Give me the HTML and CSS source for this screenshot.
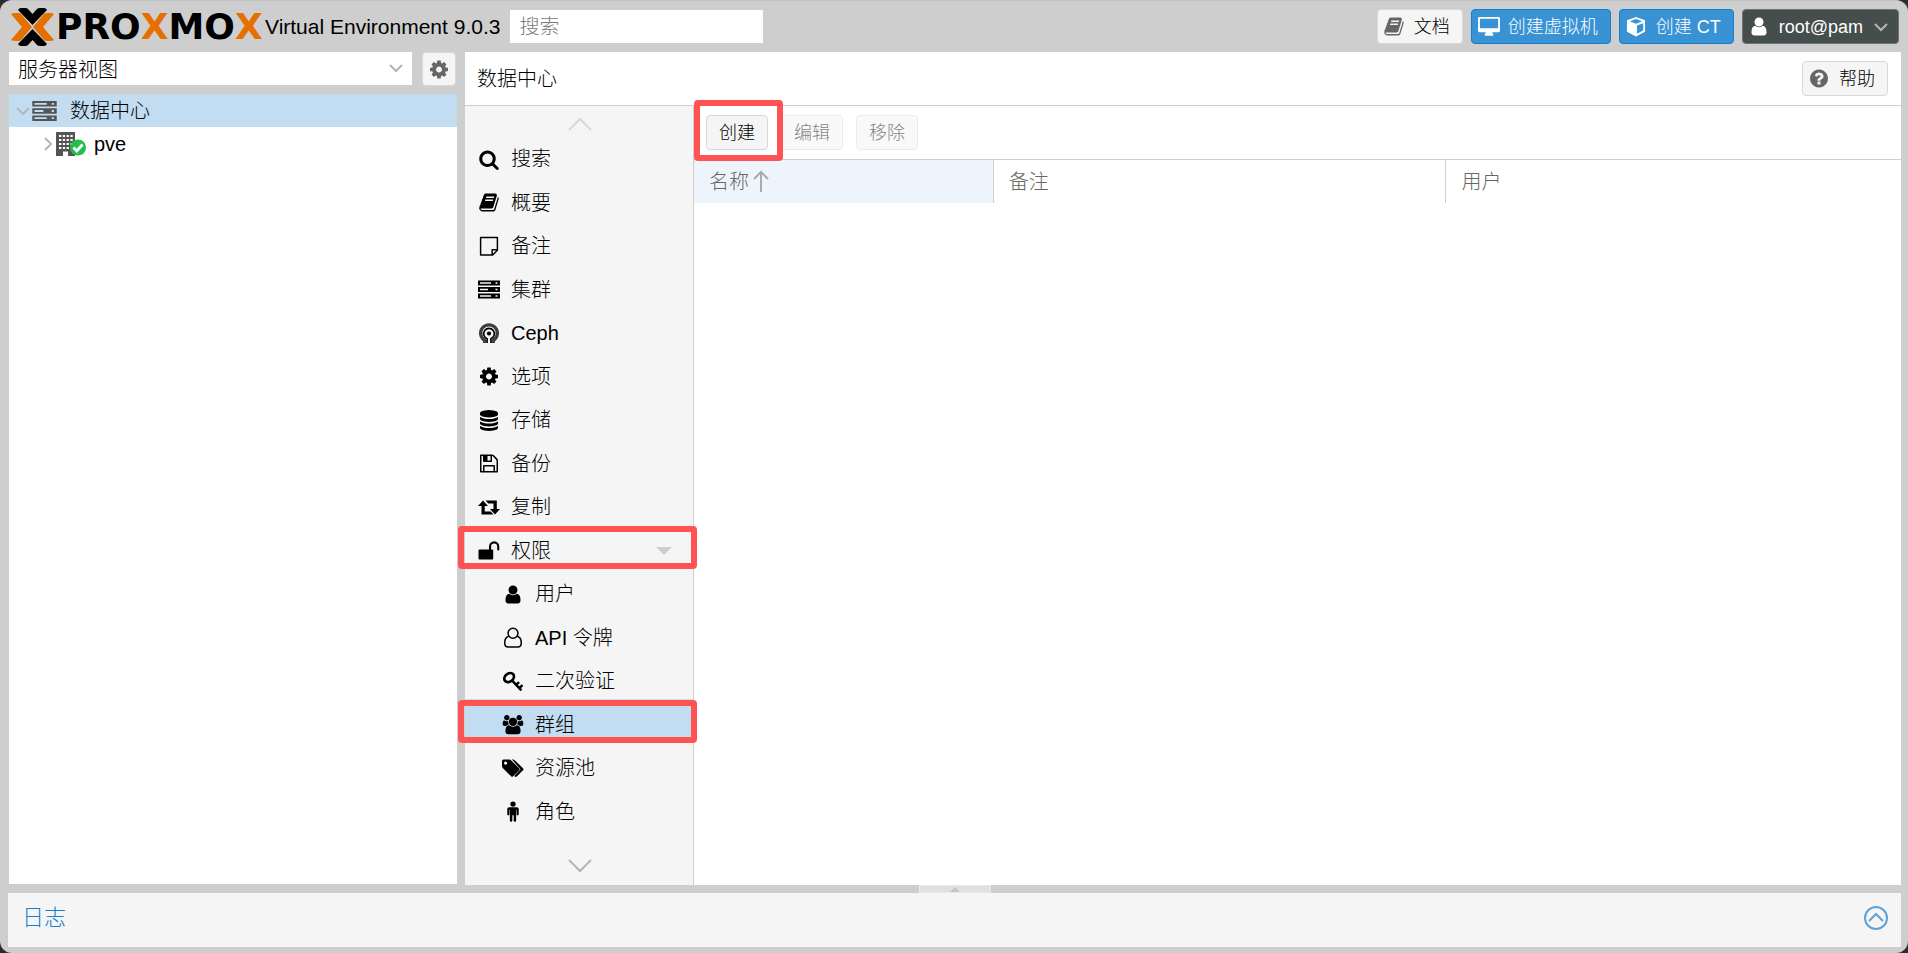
FILE: index.html
```html
<!DOCTYPE html>
<html lang="zh-CN">
  <head>
    <meta charset="UTF-8" />
    <meta name="viewport" content="width=device-width, initial-scale=1.0" />
    <title>pve - Proxmox Virtual Environment</title>
    <link rel="stylesheet" href="styles.css">
  </head>
  <body>
    <!-- Shared icons -->
    <svg class="sprite" aria-hidden="true">
      <symbol id="i-search" viewBox="0 0 1792 1792"><path d="M1216 832q0-185-131.5-316.5t-316.5-131.5-316.5 131.5-131.5 316.5 131.5 316.5 316.5 131.5 316.5-131.5 131.5-316.5zm512 832q0 52-38 90t-90 38q-54 0-90-38l-343-342q-179 124-399 124-143 0-273.5-55.5t-225-150-150-225-55.5-273.5 55.5-273.5 150-225 225-150 273.5-55.5 273.5 55.5 225 150 150 225 55.5 273.5q0 220-124 399l343 343q37 37 37 90z"/></symbol>
      <symbol id="i-book" viewBox="0 0 1792 1792"><path d="M1703 478q40 57 18 129l-275 906q-19 64-76.500 107.500t-122.500 43.500h-923q-77 0-148.500-53.500t-99.500-131.500q-24-67-2-127 0-4 3-27t4-37q1-8-3-21.500t-3-19.500q2-11 8-21t16.500-23.500 16.500-23.500q23-38 45-91.500t30-91.500q3-10 .5-30t-.5-28q3-11 17-28t17-23q21-36 42-92t25-90q1-9-2.500-32t.5-28q4-13 22-30.500t22-22.500q19-26 42.500-84.500t27.500-96.500q1-8-3-25.500t-2-26.500q2-8 9-18t18-23 17-21q8-12 16.500-30.500t15-35 16-36 19.500-32 26.500-23.500 36-11.500 47.500 5.500l-1 3q38-9 51-9h761q74 0 114 56t18 130l-274 906q-36 119-71.500 153.500t-128.500 34.500h-869q-27 0-38 15-11 16-1 43 24 70 144 70h923q29 0 56-15.500t35-41.500l300-987q7-22 5-57 38 15 59 43zm-1064 2q-4 13 2 22.500t20 9.500h608q13 0 25.500-9.500t16.500-22.500l21-64q4-13-2-22.500t-20-9.500h-608q-13 0-25.500 9.500t-16.500 22.500zm-83 256q-4 13 2 22.500t20 9.500h608q13 0 25.500-9.500t16.500-22.500l21-64q4-13-2-22.500t-20-9.500h-608q-13 0-25.500 9.500t-16.500 22.500z"/></symbol>
      <symbol id="i-note" viewBox="0 0 20 20"><path d="M2 1.500h16v12L13.500 18H2zM18 13h-5v5" fill="none" stroke="currentColor" stroke-width="1.400" stroke-linejoin="round"/></symbol>
      <symbol id="i-server" viewBox="0 0 22 18"><path fill-rule="evenodd" d="M0 0h22v5H0zM2 1.700v1.600h11V1.700zM17.500 1.700v1.600h2V1.700zM0 6.500h22v5H0zM2 8.200v1.600h8V8.200zM17.500 8.200v1.600h2V8.200zM0 13h22v5H0zM2 14.700v1.600h11v-1.600zM17.500 14.700v1.600h2v-1.600z"/></symbol>
      <symbol id="i-ceph" viewBox="0 0 22 22"><g fill="none" stroke="currentColor"><path d="M6.500 21v-2.800A8.800 8.800 0 1 1 15.500 18.200V21" stroke-width="3.400" opacity=".75"/><path d="M9 21v-4.500A5.600 5.600 0 1 1 13 16.500V21" stroke-width="1.700"/></g><circle cx="11" cy="11" r="2.200"/></symbol>
      <symbol id="i-cog" viewBox="0 0 1792 1792"><path d="M1152 896q0-106-75-181t-181-75-181 75-75 181 75 181 181 75 181-75 75-181zm512-109v222q0 12-8 23t-20 13l-185 28q-19 54-39 91 35 50 107 138 10 12 10 25t-9 23q-27 37-99 108t-94 71q-12 0-26-9l-138-108q-44 23-91 38-16 136-29 186-7 28-36 28h-222q-14 0-24.500-8.500t-11.500-21.500l-28-184q-49-16-90-37l-141 107q-10 9-25 9-14 0-25-11-126-114-165-168-7-10-7-23 0-12 8-23 15-21 51-66.500t54-70.500q-27-50-41-99l-183-27q-13-2-21-12.500t-8-23.500v-222q0-12 8-23t19-13l186-28q14-46 39-92-40-57-107-138-10-12-10-24 0-10 9-23 26-36 98.500-107.500t94.500-71.500q13 0 26 10l138 107q44-23 91-38 16-136 29-186 7-28 36-28h222q14 0 24.500 8.500t11.500 21.500l28 184q49 16 90 37l142-107q9-9 24-9 13 0 25 10 129 119 165 170 7 8 7 22 0 12-8 23-15 21-51 66.500t-54 70.500q26 50 41 98l183 28q13 2 21 12.500t8 23.500z"/></symbol>
      <symbol id="i-database" viewBox="0 0 1792 1792"><path d="M896 768q237 0 443-43t325-127v170q0 69-103 128t-280 93.500-385 34.500-385-34.500-280-93.500-103-128v-170q119 84 325 127t443 43zm0 768q237 0 443-43t325-127v170q0 69-103 128t-280 93.500-385 34.500-385-34.500-280-93.500-103-128v-170q119 84 325 127t443 43zm0-384q237 0 443-43t325-127v170q0 69-103 128t-280 93.500-385 34.500-385-34.500-280-93.500-103-128v-170q119 84 325 127t443 43zm0-1152q208 0 385 34.500t280 93.500 103 128v128q0 69-103 128t-280 93.500-385 34.500-385-34.500-280-93.500-103-128v-128q0-69 103-128t280-93.500 385-34.500z"/></symbol>
      <symbol id="i-floppy" viewBox="0 0 1792 1792"><path d="M512 1536h768v-384h-768v384zm896 0h128v-896q0-14-10-38.500t-20-34.500l-281-281q-10-10-34-20t-39-10v416q0 40-28 68t-68 28h-576q-40 0-68-28t-28-68v-416h-128v1280h128v-416q0-40 28-68t68-28h832q40 0 68 28t28 68v416zm-384-928v-320q0-13-9.500-22.500t-22.500-9.500h-192q-13 0-22.500 9.500t-9.500 22.500v320q0 13 9.500 22.500t22.500 9.500h192q13 0 22.500-9.500t9.500-22.500zm640 32v928q0 40-28 68t-68 28h-1344q-40 0-68-28t-28-68v-1344q0-40 28-68t68-28h928q40 0 88 20t76 48l280 280q28 28 48 76t20 88z"/></symbol>
      <symbol id="i-retweet" viewBox="0 0 22 16"><path d="M5 1l5 5.500H6.700V12h6l2.800 3H3.500V6.500H0zM7.500 1h11.300v8.500H22L17 15l-5-5.500h3.500V4h-5.200z"/></symbol>
      <symbol id="i-unlock" viewBox="0 0 20 20"><rect x="0" y="9" width="14" height="9.500" rx="1"/><path d="M11 9.500V6.200a3.900 3.900 0 0 1 7.800 0V9" fill="none" stroke="currentColor" stroke-width="2" stroke-linecap="round"/></symbol>
      <symbol id="i-user" viewBox="0 0 1792 1792"><path d="M1536 1399q0 109-62.500 187t-150.500 78h-854q-88 0-150.500-78t-62.500-187q0-85 8.500-160.500t31.500-152 58.500-131 94-89 134.500-34.500q131 128 313 128t313-128q76 0 134.500 34.500t94 89 58.500 131 31.500 152 8.500 160.500zm-256-887q0 159-112.500 271.500t-271.500 112.500-271.500-112.500-112.500-271.500 112.500-271.500 271.500-112.500 271.500 112.500 112.500 271.500z"/></symbol>
      <symbol id="i-user-o" viewBox="0 0 20 22"><g fill="none" stroke="currentColor" stroke-width="1.600"><circle cx="10" cy="6.500" r="5.200"/><path d="M5.500 9.700C2.800 10.500 1.300 13 1.300 16.500c0 2.800 1.400 4.500 3.700 4.500h10c2.300 0 3.700-1.700 3.700-4.500 0-3.500-1.500-6-4.200-6.800"/></g></symbol>
      <symbol id="i-key" viewBox="0 0 20 20"><g fill="none" stroke="currentColor"><ellipse cx="6.300" cy="6.300" rx="5" ry="3.800" transform="rotate(-40 6.300 6.300)" stroke-width="2.600"/><path d="M9 9l9 9.500M13 13.300l2.800-2.700M16 16.300l3-2.800" stroke-width="2.400"/></g></symbol>
      <symbol id="i-users" viewBox="0 0 2048 1792"><path d="M657 896q-162 5-265 128h-134q-82 0-138-40.500t-56-118.500q0-353 124-353 6 0 43.500 21t97.500 42.500 119 21.500q67 0 133-23-5 37-5 66 0 139 81 256zm1071 637q0 120-73 189.500t-194 69.500h-874q-121 0-194-69.500t-73-189.500q0-53 3.500-103.500t14-109 26.500-108.500 43-97.500 62-81 85.500-53.500 111.500-20q10 0 43 21.500t73 48 107 48 135 21.500 135-21.500 107-48 73-48 43-21.500q61 0 111.500 20t85.500 53.500 62 81 43 97.500 26.500 108.500 14 109 3.500 103.500zm-1024-1277q0 106-75 181t-181 75-181-75-75-181 75-181 181-75 181 75 75 181zm704 384q0 159-112.500 271.500t-271.500 112.500-271.500-112.500-112.500-271.500 112.500-271.500 271.500-112.500 271.500 112.500 112.500 271.500zm576 225q0 78-56 118.500t-138 40.500h-134q-103-123-265-128 81-117 81-256 0-29-5-66 66 23 133 23 59 0 119-21.500t97.500-42.500 43.500-21q124 0 124 353zm-128-609q0 106-75 181t-181 75-181-75-75-181 75-181 181-75 181 75 75 181z"/></symbol>
      <symbol id="i-tags" viewBox="0 0 22 20"><path fill-rule="evenodd" d="M0 2.500Q0 1 1.500 1H7q1.300 0 2.300 1l7.800 7.800q1 1 0 2l-6 6q-1 1-2 0L1 9.700Q0 8.700 0 7.500zM3.600 3a1.600 1.600 0 1 0 0 3.200 1.600 1.600 0 0 0 0-3.200z"/><path d="M9.800 1h1q1.200 0 2.200 1l8 7.800q1 1 0 2l-6 6q-1 1-2.200.3l-.6-.6 6.300-6.700L10.800 2z"/></symbol>
      <symbol id="i-male" viewBox="0 0 20 22"><circle cx="10" cy="3.200" r="2.800"/><path d="M6 6.500h8q2 0 2 2V14q0 1.200-1.100 1.200T13.800 14V9.500h-.5v11q0 1.300-1.300 1.300t-1.300-1.300V15H9.300v5.500Q9.300 21.800 8 21.800t-1.300-1.300v-11h-.5V14q0 1.200-1.100 1.200T4 14V8.500q0-2 2-2z"/></symbol>
      <symbol id="i-desktop" viewBox="0 0 24 22"><path fill-rule="evenodd" d="M2 1h20q1.500 0 1.500 1.500v13Q23.500 17 22 17h-6.500q0 1.500 1 2.500v1.300h-9v-1.300q1-1 1-2.500H2Q.5 17 .5 15.500v-13Q.5 1 2 1zm.5 2v9.800h19V3z"/></symbol>
      <symbol id="i-cube" viewBox="0 0 22 22"><path fill-rule="evenodd" d="M11 1l9.500 3.500v12L11 21.500l-9.500-5v-12zM11 3.200L4.500 5.500 11 8l6.500-2.500zM12 10v8.700l6.500-3.500V7.500z"/></symbol>
      <symbol id="i-help" viewBox="0 0 1792 1792"><path d="M1024 1376v-192q0-14-9-23t-23-9h-192q-14 0-23 9t-9 23v192q0 14 9 23t23 9h192q14 0 23-9t9-23zm256-672q0-88-55.500-163t-138.500-116-170-41q-243 0-371 213-15 24 8 42l132 100q7 6 19 6 16 0 25-12 53-68 86-92 34-24 86-24 48 0 85.500 26t37.500 59q0 38-20 61t-68 45q-63 28-115.500 86.500t-52.500 125.500v36q0 14 9 23t23 9h192q14 0 23-9t9-23q0-19 21.500-49.500t54.500-49.500q32-18 49-28.500t46-35 44.500-48 28-60.500 12.500-81zm384 192q0 209-103 385.500t-279.500 279.500-385.500 103-385.500-103-279.500-279.500-103-385.500 103-385.500 279.500-279.500 385.500-103 385.500 103 279.500 279.500 103 385.500z"/></symbol>
      <symbol id="i-down" viewBox="0 0 14 10"><path d="M1 2l6 6 6-6" fill="none" stroke="currentColor" stroke-width="2"/></symbol>
    </svg>

    <div class="viewport">
      <header class="topbar">
        <svg class="emblem" viewBox="0 0 43 38" aria-hidden="true">
          <path fill="#000" d="M10 0h4q2 0 3 1l4.500 5L26 1q1-1 3-1h4q2 0 3 2L21.500 17 7 2q1-2 3-2zM10 38h4q2 0 3-1l4.500-5 4.500 5q1 1 3 1h4q2 0 3-2L21.500 21 7 36q1 2 3 2z"/>
          <path fill="#e57000" d="M0 6q2-1 4-1h3q2 0 3 1l11 13-11 13q-1 1-3 1H4q-2 0-4-1l11-13zM43 6q-2-1-4-1h-3q-2 0-3 1L22 19l11 13q1 1 3 1h3q2 0 4-1L32 19z"/>
        </svg>
        <span class="wordmark">PRO<b>X</b>MO<b>X</b></span>
        <span class="version">Virtual Environment 9.0.3</span>
        <input class="search" type="text" placeholder="搜索" aria-label="搜索" />
        <div class="actions">
          <button class="btn" type="button"><svg class="icon"><use href="#i-book"/></svg>文档</button>
          <button class="btn btn-blue" type="button"><svg class="icon icon-wide"><use href="#i-desktop"/></svg>创建虚拟机</button>
          <button class="btn btn-blue" type="button"><svg class="icon"><use href="#i-cube"/></svg>创建 CT</button>
          <button class="btn btn-dark" type="button"><svg class="icon"><use href="#i-user"/></svg>root@pam<svg class="arrow"><use href="#i-down"/></svg></button>
        </div>
      </header>

      <div class="main">
        <!-- Resource tree -->
        <aside class="resources">
          <div class="view-bar">
            <div class="view-select">
              <select aria-label="视图"><option>服务器视图</option></select>
              <svg class="arrow"><use href="#i-down"/></svg>
            </div>
            <button class="btn btn-gear" type="button" aria-label="设置"><svg class="icon"><use href="#i-cog"/></svg></button>
          </div>
          <ul class="tree">
            <li class="node selected">
              <svg class="expander"><use href="#i-down"/></svg>
              <svg class="tree-icon"><use href="#i-server"/></svg>
              <span>数据中心</span>
            </li>
            <li class="node child">
              <svg class="expander closed"><use href="#i-down"/></svg>
              <svg class="tree-icon host" viewBox="0 0 32 26">
                <path fill="#555" d="M1 1h19v24H1z"/>
                <path d="M4 5h14M4 9h14M4 13h14M4 17h10" stroke="#fff" stroke-width="2.200" stroke-dasharray="2.300 1.500"/>
                <path fill="#fff" d="M8 20.500h5V25H8z"/>
                <circle cx="23" cy="16.500" r="8" fill="#21bf4b"/>
                <path d="M18.500 16.500l3.300 3.500 5.700-6.500" fill="none" stroke="#fff" stroke-width="2.800"/>
              </svg>
              <span>pve</span>
            </li>
          </ul>
        </aside>

        <!-- Datacenter panel -->
        <main class="content">
          <div class="content-head">
            <h1>数据中心</h1>
            <button class="btn btn-help" type="button"><svg class="icon"><use href="#i-help"/></svg>帮助</button>
          </div>
          <div class="content-body">
            <nav class="menu">
              <button class="scroller up" type="button" aria-label="向上"><svg viewBox="0 0 24 14"><path d="M1 13L12 2l11 11"/></svg></button>
              <ul>
                <li><a href="#"><svg class="icon"><use href="#i-search"/></svg>搜索</a></li>
                <li><a href="#"><svg class="icon"><use href="#i-book"/></svg>概要</a></li>
                <li><a href="#"><svg class="icon"><use href="#i-note"/></svg>备注</a></li>
                <li><a href="#"><svg class="icon"><use href="#i-server"/></svg>集群</a></li>
                <li><a href="#"><svg class="icon"><use href="#i-ceph"/></svg>Ceph</a></li>
                <li><a href="#"><svg class="icon"><use href="#i-cog"/></svg>选项</a></li>
                <li><a href="#"><svg class="icon"><use href="#i-database"/></svg>存储</a></li>
                <li><a href="#"><svg class="icon"><use href="#i-floppy"/></svg>备份</a></li>
                <li><a href="#"><svg class="icon"><use href="#i-retweet"/></svg>复制</a></li>
                <li class="marked"><a href="#"><svg class="icon"><use href="#i-unlock"/></svg>权限<span class="caret"></span></a></li>
                <li class="sub"><a href="#"><svg class="icon"><use href="#i-user"/></svg>用户</a></li>
                <li class="sub"><a href="#"><svg class="icon"><use href="#i-user-o"/></svg>API 令牌</a></li>
                <li class="sub"><a href="#"><svg class="icon"><use href="#i-key"/></svg>二次验证</a></li>
                <li class="sub active marked"><a href="#"><svg class="icon"><use href="#i-users"/></svg>群组</a></li>
                <li class="sub"><a href="#"><svg class="icon"><use href="#i-tags"/></svg>资源池</a></li>
                <li class="sub"><a href="#"><svg class="icon"><use href="#i-male"/></svg>角色</a></li>
              </ul>
              <button class="scroller down" type="button" aria-label="向下"><svg viewBox="0 0 24 14"><path d="M1 1l11 11L23 1"/></svg></button>
            </nav>

            <section class="groups">
              <div class="toolbar">
                <span class="marked-btn"><button class="btn" type="button">创建</button></span>
                <button class="btn" type="button" disabled>编辑</button>
                <button class="btn" type="button" disabled>移除</button>
              </div>
              <table class="grid">
                <thead>
                  <tr>
                    <th class="col-name">名称<svg class="sort" viewBox="0 0 16 22"><path d="M8 22V2M1 9l7-7 7 7"/></svg></th>
                    <th class="col-comment">备注</th>
                    <th>用户</th>
                  </tr>
                </thead>
              </table>
            </section>
          </div>
        </main>
      </div>

      <div class="splitter"><span class="handle"></span></div>

      <footer class="log">
        <h2>日志</h2>
        <button class="expand" type="button" aria-label="展开"><svg viewBox="0 0 24 24"><circle cx="12" cy="12" r="11"/><path d="M5 15l7-7 7 7"/></svg></button>
      </footer>
    </div>
  </body>
</html>
```
FILE: styles.css
```css
* {
  box-sizing: border-box;
}

html {
  height: 100%;
  background: #2d2d2f;
}

body {
  height: 100%;
  margin: 0;
  font-family: "Liberation Sans", "Noto Sans CJK SC", sans-serif;
  font-size: 20px;
  font-weight: 300;
  line-height: 24px;
  color: #000;
}

button,
input,
select {
  font: inherit;
  color: inherit;
}

ul,
h1,
h2 {
  margin: 0;
  padding: 0;
  font-size: 20px;
  font-weight: 300;
  list-style: none;
}

svg {
  fill: currentColor;
  flex: none;
}

.sprite {
  position: absolute;
  width: 0;
  height: 0;
}

.viewport {
  display: flex;
  flex-direction: column;
  height: 100vh;
  padding: 0 7px 6px 8px;
  background: #cecece;
  border-top: 1px solid #c2c2c2;
  border-radius: 12px;
}

.icon {
  width: 22px;
  height: 21px;
}

.arrow {
  width: 14px;
  height: 10px;
  color: #b5b5b5;
}

/* Buttons */
.btn {
  display: flex;
  align-items: center;
  justify-content: center;
  height: 35px;
  padding: 0 12px;
  background: #f5f5f5;
  border: 1px solid #d8d8d8;
  border-radius: 4px;
  font-size: 18px;
  white-space: nowrap;
}
.btn .icon {
  margin-right: 9px;
  color: #666;
}
.btn:disabled {
  opacity: 0.5;
}
.btn-blue {
  background: #3892d4;
  border-color: #157fcc;
  color: #fff;
}
.btn-dark {
  background: #464d4d;
  border-color: #6b7575;
  color: #fff;
}
.btn-blue .icon,
.btn-dark .icon {
  color: #fff;
}

/* Header */
.topbar {
  display: flex;
  align-items: center;
  flex: none;
  height: 51px;
  padding-left: 3px;
}
.emblem {
  width: 43px;
  height: 38px;
}
.wordmark {
  width: 208px;
  padding-left: 2px;
  font-family: "DejaVu Sans", sans-serif;
  font-size: 36px;
  font-weight: 700;
  white-space: nowrap;
}
.wordmark b {
  color: #e57000;
}
.version {
  padding-left: 3px;
  font-size: 21px;
  white-space: nowrap;
}
.search {
  width: 253px;
  height: 33px;
  margin-left: 10px;
  padding: 2px 9px 0;
  background: #fff;
  border: 0;
}
.search::placeholder {
  color: #7a7a7a;
}
.actions {
  display: flex;
  gap: 8px;
  margin-left: auto;
  padding-right: 2px;
}
.actions .btn {
  padding: 0 12px 0 5px;
}
.actions .icon-wide {
  width: 24px;
  margin-right: 7px;
}
.actions .btn-dark {
  padding-right: 10px;
}
.actions .arrow {
  margin-left: 11px;
}

/* Main area */
.main {
  display: flex;
  flex: 1;
  gap: 8px;
  min-height: 0;
}

.resources {
  display: flex;
  flex-direction: column;
  width: 449px;
  padding: 0 0 1px 1px;
}
.view-bar {
  display: flex;
  gap: 10px;
  margin-bottom: 8px;
}
.view-select {
  position: relative;
  flex: 1;
}
.view-select select {
  width: 100%;
  height: 33px;
  padding: 3px 9px 0;
  background: #fff;
  border: 0;
  border-radius: 0;
  appearance: none;
}
.view-select .arrow {
  position: absolute;
  top: 11px;
  right: 9px;
}
.btn-gear {
  width: 34px;
  height: 34px;
  padding: 0;
  margin-right: 1px;
}
.btn-gear .icon {
  margin: 0;
}
.tree {
  flex: 1;
  background: #fff;
}
.node {
  display: flex;
  align-items: center;
  height: 33px;
  padding-left: 7px;
}
.node.selected {
  background: #c2ddf2;
}
.node.child {
  padding-left: 32px;
}
.expander {
  width: 14px;
  height: 10px;
  color: #b5b5b5;
}
.expander.closed {
  transform: rotate(-90deg);
}
.tree-icon {
  width: 25px;
  height: 20px;
  margin: 0 13px 0 2px;
  color: #555;
}
.tree-icon.host {
  width: 32px;
  height: 26px;
  margin: 0 7px 0 0;
}

/* Content panel */
.content {
  display: flex;
  flex: 1;
  flex-direction: column;
  background: #fff;
}
.content-head {
  display: flex;
  align-items: center;
  justify-content: space-between;
  height: 54px;
  padding: 0 13px 0 12px;
  border-bottom: 1px solid #cfcfcf;
}
.btn-help {
  padding: 0 12px 0 5px;
}
.content-body {
  display: flex;
  flex: 1;
  min-height: 0;
}

.menu {
  display: flex;
  flex-direction: column;
  width: 229px;
  background: #f5f5f5;
  border-right: 1px solid #cfcfcf;
}
.menu ul {
  display: flex;
  flex: 1;
  flex-direction: column;
}
.menu li {
  position: relative;
  flex: 1;
}
.menu a {
  display: flex;
  align-items: center;
  height: 100%;
  padding: 9px 21px 0 13px;
  color: #000;
  text-decoration: none;
}
.menu .icon {
  margin-right: 11px;
}
.menu .sub a {
  padding-left: 37px;
}
.menu .active {
  background: #c2ddf2;
}
.caret {
  margin-left: auto;
  border: 8px solid transparent;
  border-top-color: #cfcfcf;
  border-bottom: 0;
}
.scroller {
  display: flex;
  align-items: center;
  justify-content: center;
  height: 27px;
  padding: 9px 0 0 2px;
  background: none;
  border: 0;
}
.scroller svg {
  width: 24px;
  height: 14px;
  fill: none;
  stroke: #d8d8d8;
  stroke-width: 2;
}
.scroller.down {
  height: 56px;
  padding-top: 18px;
}
.scroller.down svg {
  stroke: #b5b5b5;
}

/* Red highlight frames */
.marked::after,
.marked-btn::after {
  content: "";
  position: absolute;
  z-index: 1;
  inset: 1px -4px -1px -7px;
  border: 6px solid #ff5252;
  border-radius: 4px;
  pointer-events: none;
}
.marked-btn {
  position: relative;
}
.marked-btn::after {
  inset: -15px -15px -11px -12px;
}

.groups {
  flex: 1;
}
.toolbar {
  display: flex;
  align-items: center;
  gap: 13px;
  height: 54px;
  padding-left: 12px;
  border-bottom: 1px solid #cfcfcf;
}
.grid {
  width: 100%;
  border-collapse: collapse;
  table-layout: fixed;
}
.grid th {
  height: 43px;
  padding: 0 15px;
  border-right: 1px solid #cfcfcf;
  color: #666;
  font-weight: 300;
  text-align: left;
}
.grid th:last-child {
  border-right: 0;
}
.grid .col-name {
  width: 24.8%;
  background: #edf4fb;
}
.grid .col-comment {
  width: 37.5%;
}
.sort {
  width: 16px;
  height: 22px;
  margin: -4px 0 0 4px;
  vertical-align: middle;
  fill: none;
  stroke: #aaa;
  stroke-width: 2;
}

/* Log panel */
.splitter {
  display: flex;
  justify-content: center;
  flex: none;
  height: 8px;
}
.handle {
  display: flex;
  align-items: center;
  justify-content: center;
  width: 72px;
  background: #e0e0e0;
  border: 1px solid #e9e9e9;
}
.handle::before {
  content: "";
  border: 5px solid transparent;
  border-bottom-color: #c4c4c4;
  border-top: 0;
}
.log {
  display: flex;
  align-items: center;
  justify-content: space-between;
  flex: none;
  height: 54px;
  padding: 0 13px 4px 14px;
  background: #f5f5f5;
}
.log h2 {
  color: #157fcc;
  font-size: 22px;
}
.expand {
  display: flex;
  padding: 0;
  background: none;
  border: 0;
}
.expand svg {
  width: 24px;
  height: 24px;
  fill: none;
  stroke: #5fa2d8;
  stroke-width: 2;
}
```
